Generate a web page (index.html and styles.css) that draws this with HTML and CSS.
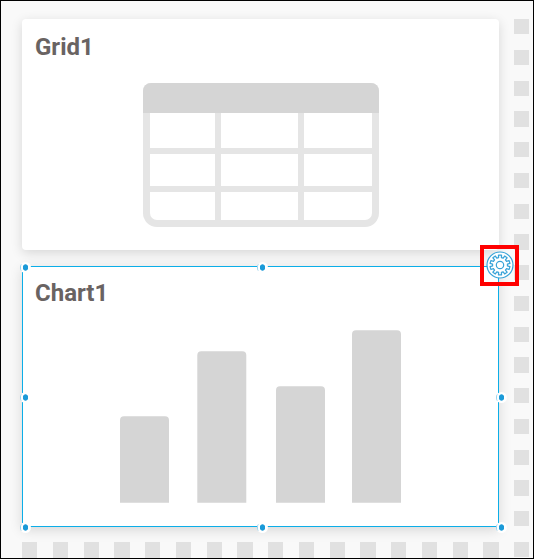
FILE: index.html
```html
<!DOCTYPE html>
<html lang="en">
<head>
<meta charset="utf-8">
<title>Dashboard designer</title>
<link rel="stylesheet" href="styles.css">
</head>
<body>
<main class="canvas">
  <section class="cards">
    <article class="card grid-card">
      <h2>Grid1</h2>
      <div class="table">
        <div class="table-head"></div>
        <div class="table-body">
          <i></i><i></i><i></i><i></i><i></i><i></i><i class="bl"></i><i></i><i class="br"></i>
        </div>
      </div>
    </article>
    <article class="card chart-card">
      <h2>Chart1</h2>
      <svg class="chart" viewBox="0 0 281 173" fill="#d5d5d5">
        <path d="M0 172.7V90.3a4 4 0 0 1 4-4h41a4 4 0 0 1 4 4v82.4zM77.3 172.7V25.3a4 4 0 0 1 4-4h41a4 4 0 0 1 4 4v147.4zM156 172.7V60.3a4 4 0 0 1 4-4h41a4 4 0 0 1 4 4v112.4zM232 172.7V4.3a4 4 0 0 1 4-4h41a4 4 0 0 1 4 4v168.4z"/>
      </svg>
      <span class="handle top left"></span><span class="handle top center"></span><span class="handle top right"></span>
      <span class="handle middle left"></span><span class="handle middle right"></span>
      <span class="handle bottom left"></span><span class="handle bottom center"></span><span class="handle bottom right"></span>
      <div class="settings">
        <svg viewBox="0 0 28 28" fill="none" stroke="#38a3d8">
          <circle cx="14" cy="14" r="13" fill="#fff" stroke-width="1.2"/>
          <path id="gear" stroke-width="1.25" stroke-linejoin="round" d=""/>
          <circle cx="14" cy="14" r="3.7" stroke-width="1.2"/>
        </svg>
      </div>
    </article>
    <div class="cells row" id="row"></div>
  </section>
  <div class="cells column" id="column"></div>
</main>
<script src="script.js"></script>
</body>
</html>
```
FILE: styles.css
```css
* { box-sizing: border-box; }
body { margin: 0; }
.canvas {
  width: 534px;
  height: 559px;
  border: 1px solid #000;
  background: #f9f9f9;
  padding: 18px 4px 0 21px;
  display: flex;
  justify-content: space-between;
  overflow: hidden;
}
.cards { width: 477px; display: flex; flex-direction: column; }
.card {
  flex: none;
  position: relative;
  background: #fff;
  box-shadow: 0 3px 12px rgba(0, 0, 0, .14);
}
.card h2 {
  margin: 0;
  font: 700 24px/28px Roboto, sans-serif;
  color: #696362;
}
.grid-card { height: 231px; border-radius: 4px; padding: 14px 13px; }
.chart-card {
  height: 261px;
  margin-top: 16px;
  border: 1px solid #0caee8;
  padding: 12px;
}
.table {
  width: 236px;
  height: 144px;
  margin: 22px 0 0 108px;
  background: #e5e5e5;
  border-radius: 8px 8px 14px 14px;
  overflow: hidden;
}
.table-head { height: 30px; background: #d5d5d5; }
.table-body {
  padding: 0 7.5px 7px 7px;
  display: grid;
  grid-template-columns: 65px 77px 67.5px;
  grid-template-rows: 34.5px 32px 28.5px;
  gap: 6px;
}
.table-body i { background: #fff; }
.table-body .bl { border-bottom-left-radius: 7px; }
.table-body .br { border-bottom-right-radius: 7px; }
.chart { display: block; width: 281px; height: 173px; margin: 23px 0 0 85px; }
.handle {
  position: absolute;
  width: 11px;
  height: 11px;
  margin: -5.5px;
  border-radius: 50%;
  background: radial-gradient(ellipse 3px 3.5px at 50% 50%, #1b9ad8 80%, #fff 100%);
}
.handle::before {
  content: "";
  position: absolute;
  left: 0;
  top: 2px;
  width: 3px;
  height: 7px;
  border-left: 1px solid #9ad3ed;
  border-radius: 50%;
}
.top { top: 0.5px; }
.middle { top: 130.5px; }
.bottom { top: 260.5px; }
.left { left: 2.5px; }
.center { left: 239.5px; }
.right { left: 478.5px; }
.settings {
  position: absolute;
  left: 457px;
  top: -22px;
  width: 39px;
  height: 41px;
  border: 4px solid #f00;
  display: flex;
  align-items: center;
  justify-content: center;
}
.settings svg { flex: none; width: 28px; height: 28px; margin: -2px 0 0 1px; }
.cells { display: flex; gap: 15.38px; }
.cells i { flex: none; width: 15.38px; height: 15.38px; background: #e1e1e1; }
.column { flex-direction: column; width: 15px; }
.column i { width: 15px; }
.row { margin-top: 15px; }
.row i { height: 16px; }
```
FILE: script.js
```js
// Placeholder cells along the right and bottom edges of the canvas.
const addCells = (id, count) => {
  const parent = document.getElementById(id);
  for (let i = 0; i < count; i++) parent.appendChild(document.createElement("i"));
};
addCells("row", 16);
addCells("column", 18);

// Gear outline: ten teeth around the icon centre.
const teeth = 10;
const points = [];
for (let i = 0; i < teeth; i++) {
  const mid = (i / teeth) * Math.PI * 2 - Math.PI / 2;
  for (const [r, offset] of [[7.5, -0.19], [10.1, -0.15], [10.1, 0.15], [7.5, 0.19]]) {
    points.push((14 + r * Math.cos(mid + offset)).toFixed(2) + " " + (14 + r * Math.sin(mid + offset)).toFixed(2));
  }
}
document.getElementById("gear").setAttribute("d", "M" + points.join("L") + "Z");
```
